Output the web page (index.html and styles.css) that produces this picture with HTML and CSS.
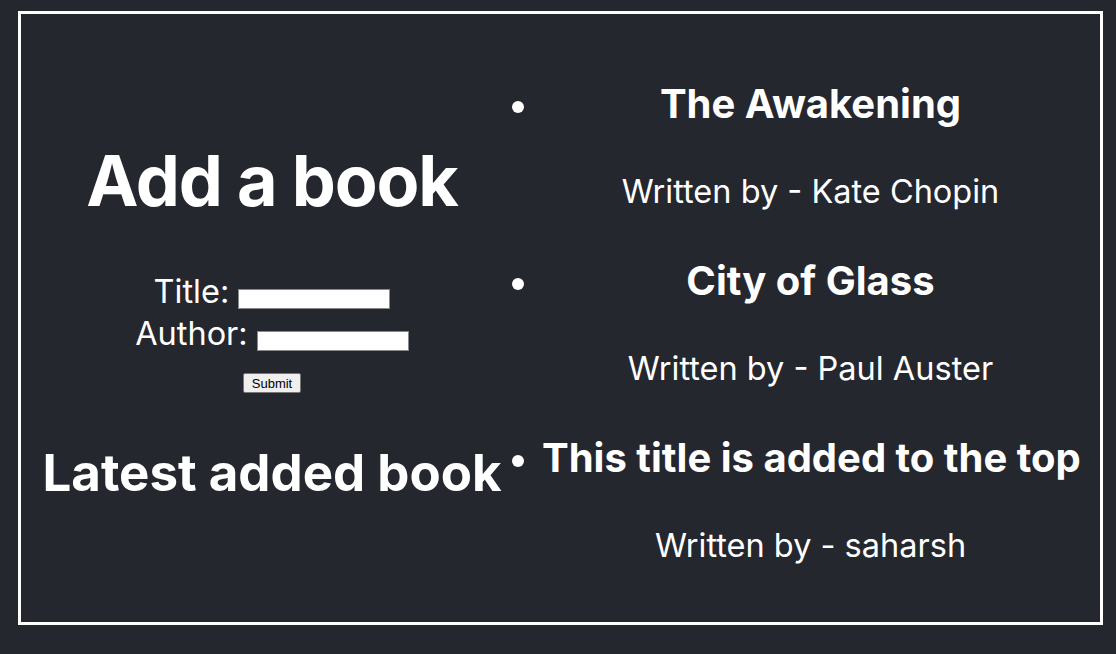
FILE: index.html
```html
<!DOCTYPE html>
<html lang="en">
<head>
<meta charset="utf-8">
<title>Books</title>
<link rel="stylesheet" href="styles.css">
</head>
<body>
<div class="app">
  <div class="left">
    <h1 class="add-title">Add a book</h1>
    <form class="form">
      <div class="row"><label class="label" for="title">Title:</label> <input class="field" id="title" type="text"></div>
      <div class="row"><label class="label" for="author">Author:</label> <input class="field" id="author" type="text"></div>
      <div class="row-btn"><button class="submit" type="button">Submit</button></div>
    </form>
    <h2 class="latest">Latest added book</h2>
  </div>
  <ul class="books">
    <li class="book">
      <h2 class="book-title">The Awakening</h2>
      <p class="book-author">Written by - Kate Chopin</p>
    </li>
    <li class="book">
      <h2 class="book-title">City of Glass</h2>
      <p class="book-author">Written by - Paul Auster</p>
    </li>
    <li class="book">
      <h2 class="book-title">This title is added to the top</h2>
      <p class="book-author">Written by - saharsh</p>
    </li>
  </ul>
</div>
</body>
</html>
```
FILE: styles.css
```css
html, body {
  margin: 0;
  padding: 0;
}
body {
  background: #25272f;
  color: #ffffff;
  font-family: Inter, "Noto Sans", sans-serif;
  padding: 11px 13px 29px 18px;
}
.app {
  box-sizing: border-box;
  height: 614px;
  border: 3px solid #ffffff;
  display: flex;
  justify-content: center;
  align-items: center;
}
.left {
  width: 460px;
  text-align: center;
  margin-top: 4px;
}
.add-title {
  margin: 0;
  font-size: 70px;
  font-weight: 700;
  letter-spacing: -1.2px;
  line-height: 87px;
  white-space: nowrap;
}
.form {
  margin: 47px 0 0;
}
.row {
  font-size: 32.5px;
  line-height: 42px;
  white-space: nowrap;
}
.label {
  font-weight: 400;
}
.field {
  box-sizing: border-box;
  width: 152px;
  height: 20px;
  border: 1px solid #8a8a8a;
  background: #ffffff;
  padding: 1px 2px;
  margin: 0;
  vertical-align: 0;
}
.row-btn {
  margin-top: 18px;
  line-height: 20px;
}
.submit {
  box-sizing: border-box;
  width: 58px;
  height: 20px;
  padding: 0;
  font-family: "Liberation Sans", Arial, sans-serif;
  font-size: 13px;
  color: #000;
  background: #efefef;
  border: 1px solid #767676;
  border-radius: 2px;
  vertical-align: top;
}
.latest {
  margin: 50px 0 0;
  font-size: 51px;
  font-weight: 700;
  line-height: 60px;
  white-space: nowrap;
}
.books {
  width: 537px;
  margin: 8px 0 0;
  padding: 0 0 0 40px;
  list-style: disc;
}
.book {
  font-size: 36px;
  text-align: center;
}
.book-title {
  margin: 48px 0;
  font-size: 40px;
  font-weight: 700;
  line-height: 45px;
  white-space: nowrap;
}
.book-author {
  margin: 48px 0;
  font-size: 32.5px;
  font-weight: 400;
  line-height: 36px;
  white-space: nowrap;
}
.book:first-child .book-title {
  margin-top: 0;
}
.book:last-child .book-author {
  margin-bottom: 0;
}
```
